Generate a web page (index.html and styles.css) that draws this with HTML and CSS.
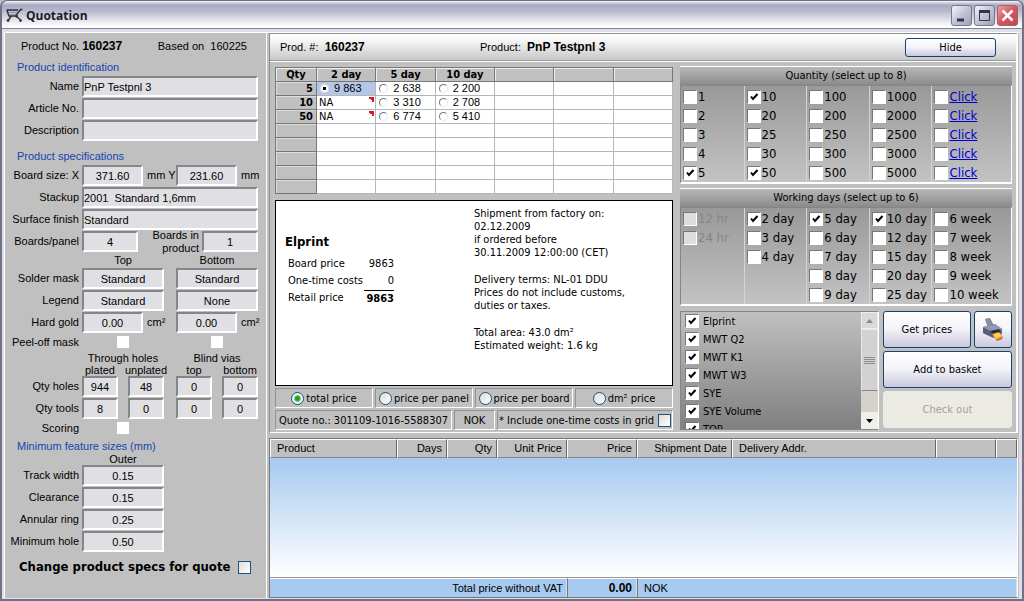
FILE: index.html
```html
<!DOCTYPE html>
<html lang="en">
<head>
<meta charset="utf-8">
<title>Quotation</title>
<link rel="stylesheet" href="styles.css">
</head>
<body>
<div class="window">
  <header class="titlebar">
    <svg class="app-icon" width="17" height="15" viewBox="0 0 17 15" fill="none" stroke="#33333d">
      <path d="M1 2.500h11M3 4.500h8.500M4 6.500h6.500" stroke="#9a9aac"/>
      <path d="M.5 2h11.500M1 2.500l2 5.500h9M16.500 1.500h-2L9.500 8l5 3.500M5 8.500L2.500 12" stroke-width="1.500"/>
      <circle cx="2" cy="12.500" r="1" fill="#33333d"/><circle cx="14.500" cy="12.500" r="1" fill="#33333d"/>
    </svg>
    <h1>Quotation</h1>
    <div class="win-buttons">
      <button class="win-btn" aria-label="Minimize"><svg width="19" height="19"><path d="M5 14h7" stroke="#333350" stroke-width="3"/></svg></button>
      <button class="win-btn" aria-label="Maximize"><svg width="19" height="19"><path d="M4.500 5v9.500h10V5" fill="none" stroke="#333350"/><path d="M4 5.500h11" stroke="#333350" stroke-width="3"/></svg></button>
      <button class="win-btn close" aria-label="Close"><svg width="19" height="19"><path d="M4.500 4.500l10 10M14.500 4.500l-10 10" stroke="#fff" stroke-width="2.500"/></svg></button>
    </div>
  </header>
  <div class="client">
    <aside class="specs">
      <div class="ident"><span>Product No. <b>160237</b></span><span>Based on&nbsp; 160225</span></div>
      <section>
        <h2>Product identification</h2>
        <div class="row"><label for="name">Name</label><input class="field wide" id="name" value="PnP Testpnl 3"></div>
        <div class="row"><label for="article">Article No.</label><input class="field wide" id="article"></div>
        <div class="row"><label for="desc">Description</label><input class="field wide" id="desc"></div>
      </section>
      <section>
        <h2>Product specifications</h2>
        <div class="row"><label for="bx">Board size: X</label><div class="half"><input class="field mid" id="bx" value="371.60"><label for="by">mm Y</label></div><div class="half"><input class="field mid" id="by" value="231.60"><span>mm</span></div></div>
        <div class="row"><label for="stack">Stackup</label><input class="field wide" id="stack" value="2001  Standard 1,6mm"></div>
        <div class="row"><label for="finish">Surface finish</label><input class="field wide" id="finish" value="Standard"></div>
        <div class="row"><label for="bpp">Boards/panel</label><div class="half panel-count"><input class="field" id="bpp" value="4"></div><div class="half product-count"><label for="bip">Boards in<br>product</label><input class="field" id="bip" value="1"></div></div>
        <div class="row caption"><span></span><div>Top</div><div>Bottom</div></div>
        <div class="row"><label for="mask">Solder mask</label><input class="field" id="mask" value="Standard"><input class="field" aria-label="Solder mask bottom" value="Standard"></div>
        <div class="row"><label for="legend">Legend</label><input class="field" id="legend" value="Standard"><input class="field" aria-label="Legend bottom" value="None"></div>
        <div class="row"><label for="gold">Hard gold</label><div class="half"><input class="field mid" id="gold" value="0.00"><span>cm²</span></div><div class="half"><input class="field mid" aria-label="Hard gold bottom" value="0.00"><span>cm²</span></div></div>
        <div class="row tick-row"><label for="peel">Peel-off mask</label><input type="checkbox" class="plain" id="peel"><input type="checkbox" class="plain" aria-label="Peel-off mask bottom"></div>
        <div class="row caption holes"><span></span><div>Through holes</div><div>Blind vias</div></div>
        <div class="row caption holes"><span></span><div class="pair"><span>plated</span><span>unplated</span></div><div class="pair"><span>top</span><span>bottom</span></div></div>
        <div class="row"><label for="qh">Qty holes</label><div class="pair"><input class="field" id="qh" value="944"><input class="field" aria-label="Unplated holes" value="48"></div><div class="pair"><input class="field" aria-label="Blind top holes" value="0"><input class="field" aria-label="Blind bottom holes" value="0"></div></div>
        <div class="row"><label for="qt">Qty tools</label><div class="pair"><input class="field" id="qt" value="8"><input class="field" aria-label="Unplated tools" value="0"></div><div class="pair"><input class="field" aria-label="Blind top tools" value="0"><input class="field" aria-label="Blind bottom tools" value="0"></div></div>
        <div class="row tick-row"><label for="scoring">Scoring</label><input type="checkbox" class="plain" id="scoring"></div>
      </section>
      <section class="features">
        <h2>Minimum feature sizes (mm)</h2>
        <div class="row caption holes"><span></span><div>Outer</div></div>
        <div class="row"><label for="tw">Track width</label><input class="field" id="tw" value="0.15"></div>
        <div class="row"><label for="cl">Clearance</label><input class="field" id="cl" value="0.15"></div>
        <div class="row"><label for="ar">Annular ring</label><input class="field" id="ar" value="0.25"></div>
        <div class="row"><label for="mh">Minimum hole</label><input class="field" id="mh" value="0.50"></div>
      </section>
      <label class="change">Change product specs for quote <input type="checkbox" class="xp"></label>
    </aside>
    <main>
      <section class="quote">
        <div class="quote-head">
          <span class="prod-no">Prod. #:&nbsp; <b>160237</b></span><span>Product:&nbsp; <b>PnP Testpnl 3</b></span>
          <button class="btn hide">Hide</button>
        </div>
        <div class="quote-body">
          <div class="prices">
            <table class="price-grid">
              <thead><tr><th class="qty">Qty</th><th>2 day</th><th>5 day</th><th>10 day</th><th></th><th></th><th></th></tr></thead>
              <tbody>
                <tr><th>5</th><td class="selected"><label><input type="radio" name="p" class="dot" checked>9 863</label></td><td><label><input type="radio" name="p" class="dot">2 638</label></td><td><label><input type="radio" name="p" class="dot">2 200</label></td><td></td><td></td><td></td></tr>
                <tr><th>10</th><td class="na">NA</td><td><label><input type="radio" name="p" class="dot">3 310</label></td><td><label><input type="radio" name="p" class="dot">2 708</label></td><td></td><td></td><td></td></tr>
                <tr><th>50</th><td class="na">NA</td><td><label><input type="radio" name="p" class="dot">6 774</label></td><td><label><input type="radio" name="p" class="dot">5 410</label></td><td></td><td></td><td></td></tr>
                <tr><th></th><td></td><td></td><td></td><td></td><td></td><td></td></tr>
                <tr><th></th><td></td><td></td><td></td><td></td><td></td><td></td></tr>
                <tr><th></th><td></td><td></td><td></td><td></td><td></td><td></td></tr>
                <tr><th></th><td></td><td></td><td></td><td></td><td></td><td></td></tr>
                <tr><th></th><td></td><td></td><td></td><td></td><td></td><td></td></tr>
              </tbody>
            </table>
            <div class="summary">
              <div class="cost">
                <h3>Elprint</h3>
                <dl><dt>Board price</dt><dd>9863</dd><dt>One-time costs</dt><dd>0</dd><dt>Retail price</dt><dd class="sum">9863</dd></dl>
              </div>
              <div class="terms">
                <p>Shipment from factory on:<br>02.12.2009<br>if ordered before<br>30.11.2009 12:00:00 (CET)</p>
                <p>Delivery terms: NL-01 DDU<br>Prices do not include customs,<br>duties or taxes.</p>
                <p>Total area: 43.0 dm²<br>Estimated weight: 1.6 kg</p>
              </div>
            </div>
            <div class="modes">
              <label class="sunk"><input type="radio" name="mode" class="xp-radio" checked>total price</label>
              <label class="sunk"><input type="radio" name="mode" class="xp-radio">price per panel</label>
              <label class="sunk"><input type="radio" name="mode" class="xp-radio">price per board</label>
              <label class="sunk"><input type="radio" name="mode" class="xp-radio">dm² price</label>
            </div>
            <div class="status">
              <span class="sunk number">Quote no.: 301109-1016-5588307</span><span class="sunk currency">NOK</span>
              <label class="sunk include">* Include one-time costs in grid <input type="checkbox" class="xp"></label>
            </div>
          </div>
          <div class="options">
            <fieldset class="group">
              <legend>Quantity (select up to 8)</legend>
              <div class="columns">
                <div><label><input type="checkbox" class="tick">1</label><label><input type="checkbox" class="tick">2</label><label><input type="checkbox" class="tick">3</label><label><input type="checkbox" class="tick">4</label><label><input type="checkbox" class="tick" checked>5</label></div>
                <div><label><input type="checkbox" class="tick" checked>10</label><label><input type="checkbox" class="tick">20</label><label><input type="checkbox" class="tick">25</label><label><input type="checkbox" class="tick">30</label><label><input type="checkbox" class="tick" checked>50</label></div>
                <div><label><input type="checkbox" class="tick">100</label><label><input type="checkbox" class="tick">200</label><label><input type="checkbox" class="tick">250</label><label><input type="checkbox" class="tick">300</label><label><input type="checkbox" class="tick">500</label></div>
                <div><label><input type="checkbox" class="tick">1000</label><label><input type="checkbox" class="tick">2000</label><label><input type="checkbox" class="tick">2500</label><label><input type="checkbox" class="tick">3000</label><label><input type="checkbox" class="tick">5000</label></div>
                <div><span class="opt"><input type="checkbox" class="tick" aria-label="Custom quantity 1"><a href="#">Click</a></span><span class="opt"><input type="checkbox" class="tick" aria-label="Custom quantity 2"><a href="#">Click</a></span><span class="opt"><input type="checkbox" class="tick" aria-label="Custom quantity 3"><a href="#">Click</a></span><span class="opt"><input type="checkbox" class="tick" aria-label="Custom quantity 4"><a href="#">Click</a></span><span class="opt"><input type="checkbox" class="tick" aria-label="Custom quantity 5"><a href="#">Click</a></span></div>
              </div>
            </fieldset>
            <fieldset class="group">
              <legend>Working days (select up to 6)</legend>
              <div class="columns">
                <div><label class="off"><input type="checkbox" class="tick" disabled>12 hr</label><label class="off"><input type="checkbox" class="tick" disabled>24 hr</label></div>
                <div><label><input type="checkbox" class="tick" checked>2 day</label><label><input type="checkbox" class="tick">3 day</label><label><input type="checkbox" class="tick">4 day</label></div>
                <div><label><input type="checkbox" class="tick" checked>5 day</label><label><input type="checkbox" class="tick">6 day</label><label><input type="checkbox" class="tick">7 day</label><label><input type="checkbox" class="tick">8 day</label><label><input type="checkbox" class="tick">9 day</label></div>
                <div><label><input type="checkbox" class="tick" checked>10 day</label><label><input type="checkbox" class="tick">12 day</label><label><input type="checkbox" class="tick">15 day</label><label><input type="checkbox" class="tick">20 day</label><label><input type="checkbox" class="tick">25 day</label></div>
                <div><label><input type="checkbox" class="tick">6 week</label><label><input type="checkbox" class="tick">7 week</label><label><input type="checkbox" class="tick">8 week</label><label><input type="checkbox" class="tick">9 week</label><label><input type="checkbox" class="tick">10 week</label></div>
              </div>
            </fieldset>
            <div class="bottom">
              <div class="suppliers">
                <div class="list">
                  <label><input type="checkbox" class="tick" checked>Elprint</label>
                  <label><input type="checkbox" class="tick" checked>MWT Q2</label>
                  <label><input type="checkbox" class="tick" checked>MWT K1</label>
                  <label><input type="checkbox" class="tick" checked>MWT W3</label>
                  <label><input type="checkbox" class="tick" checked>SYE</label>
                  <label><input type="checkbox" class="tick" checked>SYE Volume</label>
                  <label><input type="checkbox" class="tick" checked>TOP</label>
                </div>
                <div class="scroll">
                  <button aria-label="Scroll up"><svg width="7" height="4"><path d="M0 4L3.500 0 7 4z" fill="#8d8b85"/></svg></button>
                  <div class="thumb"></div>
                  <button class="down" aria-label="Scroll down"><svg width="7" height="4"><path d="M0 0h7L3.500 4z"/></svg></button>
                </div>
              </div>
              <div class="actions">
                <button class="btn">Get prices</button>
                <button class="btn" aria-label="Print"><svg width="22" height="24" viewBox="0 0 22 24">
                  <path d="M3 1l5-1 4 8-6 2z" fill="#747b91"/><path d="M4 1l3-1 3 6-4 2z" fill="#8a90a5"/>
                  <path d="M1 9l12-3 7 5v5l-9 4L1 15z" fill="#69708b"/><path d="M1 9l12-3 7 5-9 3z" fill="#9499b3"/>
                  <path d="M1 10l10 5v4L1 15z" fill="#555b77"/><path d="M8 13l9-2 2 3-7 3z" fill="#292c40"/>
                  <path d="M10 16l7-2 4 5-7 3z" fill="#f5a52b"/><path d="M12 16l5-1 2 3-5 2z" fill="#ffd25c"/><path d="M14 22l7-3-1 2-5 2z" fill="#a85b20"/>
                </svg></button>
                <button class="btn span">Add to basket</button>
                <button class="btn span" disabled>Check out</button>
              </div>
            </div>
          </div>
        </div>
      </section>
      <table class="basket">
        <colgroup><col class="c-product"><col class="c-days"><col class="c-qty"><col class="c-price"><col class="c-price"><col class="c-date"><col><col class="c-extra"><col class="c-end"></colgroup>
        <thead><tr><th class="left">Product</th><th>Days</th><th>Qty</th><th>Unit Price</th><th>Price</th><th>Shipment Date</th><th class="left">Delivery Addr.</th><th></th><th></th></tr></thead>
        <tbody><tr><td colspan="9"></td></tr></tbody>
        <tfoot><tr><td colspan="4">Total price without VAT</td><td class="total">0.00</td><td colspan="4" class="left">NOK</td></tr></tfoot>
      </table>
    </main>
  </div>
</div>
</body>
</html>
```
FILE: styles.css
```css
* { box-sizing: border-box; }
body {
  margin: 0;
  font: 11px/13px "Liberation Sans", Arial, sans-serif;
  color: #000;
  background: #c0c0c0;
}
h1, h2, h3, p, dl, dd { margin: 0; }
input, button { font: inherit; color: inherit; margin: 0; padding: 0; }

.window {
  display: flex;
  flex-direction: column;
  min-height: 100vh;
  border: 1px solid #737085;
  border-width: 1px 2px 2px;
  border-radius: 7px 7px 0 0;
  background: #dedee8;
}
.titlebar {
  display: flex;
  align-items: center;
  height: 28px;
  padding: 2px 4px 0 4px;
  border-bottom: 1px solid #85858f;
  border-radius: 6px 6px 0 0;
  background: linear-gradient(#f4f4fa 0, #a9a9c2 4px, #b9b9cd 10px, #f0f0f6 22px, #fff 26px);
}
.titlebar h1 {
  flex: 1;
  margin-left: 3px;
  font: bold 12px/16px "Open Sans", "Noto Sans", sans-serif;
  color: #1c1c24;
}
.win-buttons { display: flex; gap: 2px; }
.win-btn {
  display: flex;
  width: 21px;
  height: 21px;
  border: 1px solid #77778f;
  border-radius: 3px;
  background: linear-gradient(135deg, #f6f6fb, #c2c2d6 50%, #a0a0bc);
}
.win-btn.close { background: linear-gradient(135deg, #eda0a0, #d75560 50%, #c24450); border-color: #9c6474; }

.client {
  display: flex;
  flex: 1;
  gap: 2px;
  margin: 3px 3px 1px 2px;
  border-top: 1px solid #fff;
  background: #c0c0c0;
}

/* left column: product specification */
.specs {
  flex: 0 0 263px;
  padding: 6px 8px 0 4px;
  border-left: 1px solid #fff;
  border-right: 1px solid #fff;
  background: #c0c0c0;
}
.ident {
  display: flex;
  justify-content: space-between;
  align-items: baseline;
  padding: 0 11px 0 12px;
  line-height: 14px;
}
.ident b { font-size: 12px; }
.specs h2 { margin: 8px 0 2px 8px; font-size: 11px; line-height: 13px; font-weight: normal; color: #1545b0; }
.row {
  display: grid;
  grid-template-columns: 61px 82px 82px;
  column-gap: 12px;
  align-items: start;
  height: 22px;
}
.row > :first-child { text-align: right; line-height: 20px; margin-right: -9px; white-space: nowrap; margin-left: -4px; }
.row > * + * { min-width: 0; }
.field {
  width: 100%;
  height: 21px;
  border: 2px solid;
  border-color: #85858a #fff #fff #85858a;
  background: #e0e0e4;
  text-align: center;
}
.field.wide { grid-column: 2 / 4; text-align: left; white-space: pre; }
.field.mid { width: 61px; flex: none; }
.half { display: flex; gap: 4px; white-space: nowrap; line-height: 20px; }
.panel-count .field { width: 56px; }
.product-count { justify-content: flex-end; gap: 3px; }
.product-count .field { flex: 0 0 56px; }
.product-count label { line-height: 13px; text-align: right; margin-top: -2px; }
.caption { height: 15px; text-align: center; line-height: 15px; }
.holes { height: 12px; line-height: 12px; }
.row.caption > :first-child { line-height: 12px; }
.pair { display: grid; grid-template-columns: 36px 36px; gap: 10px; }
.pair > span { display: flex; justify-content: center; }
.tick-row { height: 18px; }
.tick-row > :first-child { line-height: 17px; }
.plain { appearance: none; justify-self: center; width: 12px; height: 12px; margin-top: 2px; background: #fff; }
.specs .features h2 { margin-top: 2px; margin-bottom: 0; }
.change {
  display: flex;
  align-items: center;
  justify-content: space-between;
  margin: 6px 7px 0 10px;
  font: bold 13px/16px "DejaVu Sans Condensed", "DejaVu Sans", sans-serif;
  white-space: nowrap;
}
.xp { appearance: none; flex: none; width: 13px; height: 13px; border: 1px solid #1d5281; background: linear-gradient(135deg, #dcdcd7, #fff); }

/* quote panel */
main { display: flex; flex: 1; flex-direction: column; gap: 5px; min-width: 0; padding: 0 1px 0 0; }
.quote { border: 1px solid #8c8c8c; border-right: 2px solid #fff; border-bottom-color: #fff; }
.quote-head {
  display: flex;
  align-items: center;
  height: 27px;
  padding: 0 20px 0 10px;
  border-bottom: 1px solid #9a9a9a;
  border-top: 1px solid #fff;
  background: linear-gradient(#fff, #f1f1f1 30%, #c8c8c8);
}
.quote-head b { font-size: 12px; }
.prod-no { width: 200px; }
.btn {
  border: 1px solid #164270;
  border-radius: 3px;
  background: linear-gradient(#fff, #f2f2f9 50%, #c9c9df);
  font: 11px/13px "DejaVu Sans Condensed", "DejaVu Sans", sans-serif;
}
.btn:disabled { border-color: #ecebe0; background: #ecebe3; color: #a2a294; }
.hide { width: 91px; height: 19px; margin-left: auto; }
.quote-body { display: flex; gap: 7px; padding: 4px 4px 2px 5px; border-top: 1px solid #fff; font-family: "DejaVu Sans Condensed", "DejaVu Sans", sans-serif; }
.prices { flex: 398 1 0; display: flex; flex-direction: column; gap: 2px; min-width: 0; }
.options { flex: 332 1 0; min-width: 0; display: flex; flex-direction: column; gap: 4px; }
.price-grid {
  width: 100%;
  margin: 1px 0 4px;
  table-layout: fixed;
  border-collapse: collapse;
  background: #fff;
  border: 1px solid #7f8c99;
}
.price-grid th, .price-grid td { height: 14px; padding: 0; border: 1px solid #b2b7ba; line-height: 13px; }
.price-grid th { background: #c0c0c0; border-color: #777; font-size: 11px; }
.price-grid thead th { box-shadow: inset 1px 1px #eee; }
.price-grid .qty { width: 41px; }
.price-grid tbody th { text-align: right; padding-right: 3px; box-shadow: inset 1px 1px #ddd; }
.price-grid td.selected { background: #b5c7e7; }
.price-grid label { display: flex; align-items: center; gap: 5px; padding-left: 3px; height: 13px; font-family: "Liberation Sans", sans-serif; }
.price-grid .na { padding-left: 2px; background: linear-gradient(45deg, transparent 50%, #d51a2c 50%) right 1px top 1px / 6px 6px no-repeat; }
.dot { appearance: none; width: 9px; height: 9px; border: 1px solid; border-color: #777 #e8e8e8 #e8e8e8 #777; border-radius: 50%; background: #fff; }
.dot:checked { background: radial-gradient(circle, #000 2px, #fff 2px); border-color: #ddd; }
.summary { display: grid; grid-template-columns: 1fr 1fr; flex: 1; padding: 6px 9px; border: 1px solid #000; background: #fff; }
.cost { padding-top: 27px; }
.cost h3 { font-size: 13px; line-height: 16px; }
.cost dl { display: grid; grid-template-columns: 76px 30px; row-gap: 1px; margin: 6px 0 0 3px; line-height: 16px; white-space: nowrap; }
.cost dd { text-align: right; }
.cost .sum { font-weight: bold; border-top: 1px solid #000; }
.terms p { margin-bottom: 14px; white-space: nowrap; }
.sunk { border: 1px solid; border-color: #929292 #fff #fff #929292; height: 20px; display: flex; align-items: center; justify-content: center; white-space: nowrap; }
.modes { display: grid; grid-template-columns: repeat(4, 1fr); gap: 2px; }
.modes .sunk { gap: 2px; }
.xp-radio { appearance: none; flex: none; width: 13px; height: 13px; border: 1px solid #1d5281; border-radius: 50%; background: linear-gradient(135deg, #dcdcd7, #fff); }
.xp-radio:checked { background: radial-gradient(circle, #21a121 2px, #f2f5f2 4px); }
.status { display: flex; gap: 2px; }
.number { flex: 179 1 0; }
.currency { flex: 40 1 0; }
.include { flex: 178 1 0; gap: 4px; }

.group { margin: 0; padding: 0; border: 0; border-top: 1px solid #fff; min-width: 0; }
.group legend {
  float: left;
  width: 100%;
  height: 18px;
  padding: 0;
  text-align: center;
  line-height: 17px;
  background: linear-gradient(#b7b7b7, #8a8a8a);
}
.columns {
  clear: both;
  display: grid;
  grid-template-columns: repeat(4, 63fr) 80fr;
  min-height: 99px;
  border: 1px solid #858585;
  border-right-color: #fff;
  border-bottom: 2px solid #fff;
  background: linear-gradient(#999, #c3c3c3);
  font-size: 13px;
}
.columns > div { padding: 1px 0 0 2px; }
.columns > div + div { border-left: 1px solid #d4d4d4; }
.columns label, .opt { display: flex; align-items: center; height: 19px; white-space: nowrap; gap: 1px; }
.columns a { color: #00c; }
.columns .off { color: #858585; }
.tick { appearance: none; flex: none; width: 14px; height: 14px; border: 1px solid; border-color: #777 #fff #fff #777; background: #fff; }
.tick:checked { background: #fff url("data:image/svg+xml,%3Csvg xmlns='http://www.w3.org/2000/svg' width='12' height='12'%3E%3Cpath d='M3 5.500l2 2.500L9.500 3' fill='none' stroke='%23000' stroke-width='2'/%3E%3C/svg%3E") center no-repeat; }
.tick:disabled { background: #ddd; }
.bottom { display: flex; gap: 4px; margin-top: 1px; }
.suppliers { display: flex; flex: 198 1 0; height: 119px; border: 1px solid #858585; border-right-color: #fff; background: linear-gradient(#c0c0c0, #808080); overflow: hidden; }
.list { flex: 1; padding-left: 4px; overflow: hidden; }
.list label { display: flex; align-items: center; gap: 4px; height: 18px; }
.scroll { display: flex; flex-direction: column; width: 17px; background: #d5d2c9; }
.scroll button { display: flex; align-items: center; justify-content: center; height: 17px; border: 1px solid #eee; background: #d9d9d6; }
.scroll .down { margin-top: auto; background: #f0efea; }
.thumb { height: 62px; border: 1px solid #e8e8e8; border-bottom-color: #888; background: repeating-linear-gradient(#8b8b8b 0 1px, transparent 1px 2px) center / 11px 7px no-repeat, #d2d2d2; }
.actions { flex: 130 1 0; display: grid; grid-template-columns: 1fr 38px; grid-template-rows: repeat(3, 37px); gap: 3px; }
.actions .btn { display: flex; align-items: center; justify-content: center; }
.actions .span { grid-column: 1 / 3; }

/* basket table */
.basket { flex: 1; width: 100%; height: 157px; table-layout: fixed; border-collapse: separate; border-spacing: 0; border: 1px solid #777; border-right-color: #fff; }
.basket th { height: 19px; padding: 0 4px; font-weight: normal; text-align: right; background: #c0c0c0; border: 1px solid; border-color: #fff #666 #888 #fff; white-space: nowrap; }
.basket th.left, .basket td.left { text-align: left; padding-left: 6px; }
.basket td { padding: 0 3px; }
.basket tbody td { background: linear-gradient(#a6caf0, #fff); border-bottom: 1px solid #999; }
.basket tfoot td { height: 19px; background: #a6caf0; text-align: right; border-top: 1px solid #fff; border-right: 1px solid #ddd; }
.basket tfoot td + td { border-left: 1px solid #777; }
.basket .total { font-weight: bold; padding-right: 4px; font-size: 12px; }
.c-product { width: 17%; }
.c-days, .c-qty { width: 50px; }
.c-price { width: 70px; }
.c-date { width: 95px; }
.c-extra { width: 60px; }
.c-end { width: 21px; }
```
